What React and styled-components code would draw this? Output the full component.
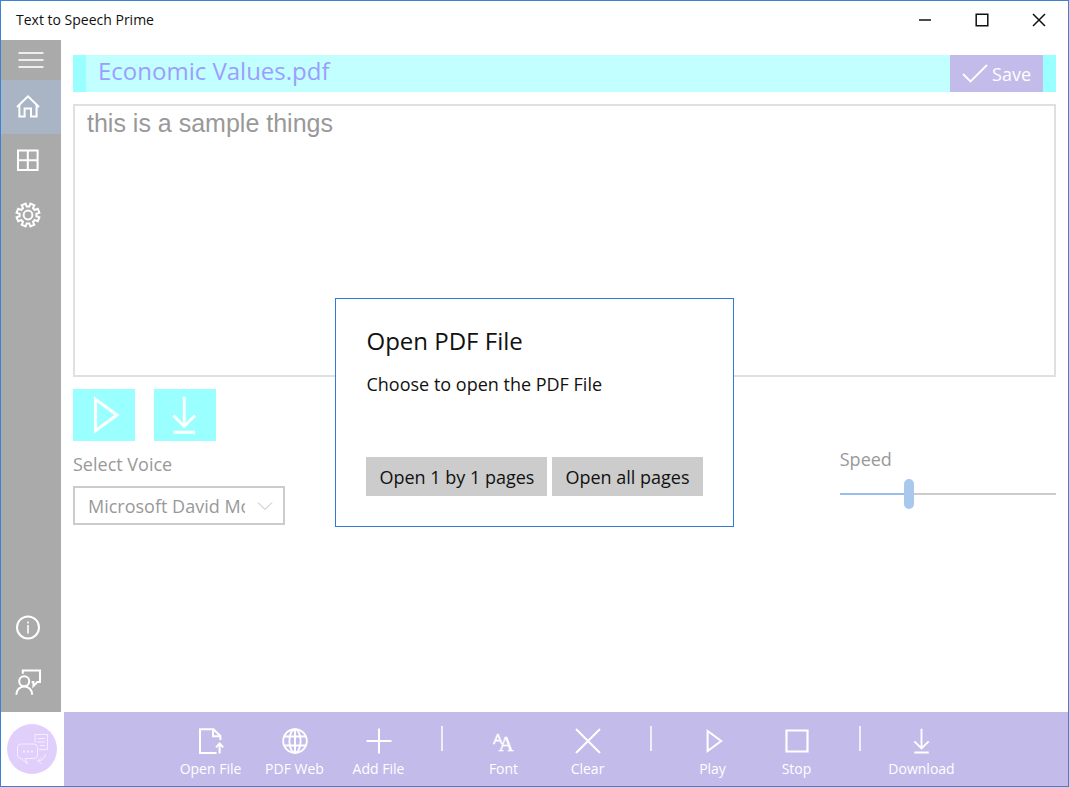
import React, { useState } from "react";
import styled, { createGlobalStyle } from "styled-components";

const MenuIcon = () => (
  <Icon size={26} viewBox="0 0 26 26" strokeWidth="2">
    <path d="M0.5 6H25.5M0.5 13H25.5M0.5 20H25.5" />
  </Icon>
);

const HomeIcon = () => (
  <Icon size={26} viewBox="0 0 26 26" strokeWidth="2">
    <path d="M2 13L13 2.4L24 13M4.4 11V22.6H9.6V14.4H16V22.6H21.6V11" />
  </Icon>
);

const GridIcon = () => (
  <Icon size={26} viewBox="0 0 26 26" strokeWidth="2">
    <path d="M3 2.5H22.6V22.1H3ZM12.8 2.5V22.1M3 12.3H22.6" />
  </Icon>
);

const GearIcon = () => (
  <Icon size={28} viewBox="0 0 28 28" strokeWidth="2">
    <path d="M11.6 2.6L12.7 5.6H15.3L16.4 2.6L20.3 4.2L19 7.2L20.8 9L23.8 7.7L25.4 11.6L22.4 12.7V15.3L25.4 16.4L23.8 20.3L20.8 19L19 20.8L20.3 23.8L16.4 25.4L15.3 22.4H12.7L11.6 25.4L7.7 23.8L9 20.8L7.2 19L4.2 20.3L2.6 16.4L5.6 15.3V12.7L2.6 11.6L4.2 7.7L7.2 9L9 7.2L7.7 4.2Z" />
    <circle cx="14" cy="14" r="4.4" />
  </Icon>
);

const InfoIcon = () => (
  <Icon size={26} viewBox="0 0 26 26" strokeWidth="2">
    <circle cx="13" cy="12.4" r="11" />
    <path d="M13 10V18.4M13 6.4V8.4" strokeWidth="1.6" />
  </Icon>
);

const FeedbackIcon = () => (
  <Icon size={28} viewBox="0 0 28 28" strokeWidth="2">
    <circle cx="10.2" cy="13.2" r="5" />
    <path d="M2.4 26.8C2.4 21.8 5.8 18.6 10.2 18.6S18.2 21.8 18.2 26.8" />
    <path d="M8.8 5.8V2.6H26V14H23.4L19.4 18V14H17.6" />
  </Icon>
);

const LogoIcon = () => (
  <svg width="50" height="50" viewBox="0 0 50 50" fill="none" stroke="#f5edff" aria-hidden="true">
    <circle cx="25" cy="25" r="25" fill="#e1cffb" stroke="none" />
    <path d="M28 19V10.5H40.5V25.5H32M30.5 14.5H38M30.5 18H38M33 21.5H38" />
    <path d="M14 20H27Q30.5 20 30.5 23.5V31Q30.5 34.5 27 34.5H18L20.5 40L14.5 34.5Q10.5 34.5 10.5 31V23.5Q10.5 20 14 20Z" />
    <path d="M38.5 30Q37.5 36 31 37M34 33.5L30.5 37L34.5 39.5" />
    <path d="M16 27.5H18M20 27.5H22M24 27.5H26" strokeWidth="2" />
  </svg>
);

const CheckIcon = () => (
  <Icon size={26} viewBox="0 0 26 26" strokeWidth="1.8">
    <path d="M1 13L8.5 20.5L25 4" />
  </Icon>
);

const OpenFileIcon = () => (
  <Icon size={28} viewBox="0 0 28 28" strokeWidth="2">
    <path d="M19.5 26H3V2.2H16.4L23.4 9V13M16 2.2V9.2H23.4" />
    <path d="M22.6 26.4V17M19 20.4L22.6 16.4L26.2 20.4" />
  </Icon>
);

const GlobeIcon = () => (
  <Icon size={28} viewBox="0 0 28 28" strokeWidth="1.9">
    <circle cx="14" cy="14" r="11.8" />
    <ellipse cx="14" cy="14" rx="5.6" ry="11.8" />
    <path d="M14 2V26M3.2 9.5H24.8M3.2 18.5H24.8" />
  </Icon>
);

const PlusIcon = () => (
  <Icon size={28} viewBox="0 0 28 28" strokeWidth="2">
    <path d="M14 1.5V26.5M1.5 14H26.5" />
  </Icon>
);

const FontIcon = () => (
  <FontGlyphs viewBox="0 0 28 28" aria-hidden="true">
    <text x="3" y="17" fontFamily="Open Sans" fontSize="15">
      A
      <tspan dx="-4" dy="7" fontFamily="Liberation Serif" fontSize="21">
        A
      </tspan>
    </text>
  </FontGlyphs>
);

const ClearIcon = () => (
  <Icon size={28} viewBox="0 0 28 28" strokeWidth="2">
    <path d="M2 2L26 26M26 2L2 26" />
  </Icon>
);

const PlayIcon = ({ size = 28 }) => (
  <Icon size={size} viewBox="0 0 28 28" strokeWidth="2">
    <path d="M8.6 4V24L22.2 14Z" />
  </Icon>
);

const StopIcon = () => (
  <Icon size={28} viewBox="0 0 28 28" strokeWidth="2.2">
    <path d="M3.5 3.5H24.5V24.5H3.5Z" />
  </Icon>
);

const DownloadIcon = ({ size = 28 }) => (
  <Icon size={size} viewBox="0 0 28 28" strokeWidth="1.9">
    <path d="M13.5 1.8V21.5M6.3 14.3L13.5 21.5L20.7 14.3M6.3 25.5H20.7" />
  </Icon>
);

const commandGroups = [
  [
    { label: "Open File", icon: <OpenFileIcon /> },
    { label: "PDF Web", icon: <GlobeIcon /> },
    { label: "Add File", icon: <PlusIcon /> },
  ],
  [
    { label: "Font", icon: <FontIcon /> },
    { label: "Clear", icon: <ClearIcon /> },
  ],
  [
    { label: "Play", icon: <PlayIcon /> },
    { label: "Stop", icon: <StopIcon /> },
  ],
  [{ label: "Download", icon: <DownloadIcon /> }],
];

const App = () => {
  const [fileName, setFileName] = useState("Economic Values.pdf");
  const [text, setText] = useState("this is a sample things");
  const [speed, setSpeed] = useState(31);
  const [modalOpen, setModalOpen] = useState(true);

  const hideModal = () => {
    setModalOpen(false);
  };

  return (
    <>
      <GlobalStyle />
      <Window>
        <TitleBar>
          <AppName>Text to Speech Prime</AppName>
          <CaptionButton aria-label="Minimize">
            <Icon size={14} viewBox="0 0 14 14" strokeWidth="1.5">
              <path d="M1 7H13" />
            </Icon>
          </CaptionButton>
          <CaptionButton aria-label="Maximize">
            <Icon size={14} viewBox="0 0 14 14" strokeWidth="1.5">
              <path d="M1.2 1.2H12.8V12.8H1.2Z" />
            </Icon>
          </CaptionButton>
          <CaptionButton aria-label="Close">
            <Icon size={14} viewBox="0 0 14 14" strokeWidth="1.5">
              <path d="M1 1L13 13M13 1L1 13" />
            </Icon>
          </CaptionButton>
        </TitleBar>

        <Body>
          <Sidebar>
            <MenuButton aria-label="Menu">
              <MenuIcon />
            </MenuButton>
            <NavButton aria-label="Home" $active>
              <HomeIcon />
            </NavButton>
            <NavButton aria-label="Apps">
              <GridIcon />
            </NavButton>
            <NavButton aria-label="Settings">
              <GearIcon />
            </NavButton>
            <Spacer />
            <NavButton aria-label="About">
              <InfoIcon />
            </NavButton>
            <NavButton aria-label="Feedback">
              <FeedbackIcon />
            </NavButton>
          </Sidebar>

          <Content>
            <FileBar>
              <FileName
                aria-label="File name"
                value={fileName}
                onChange={(e) => setFileName(e.target.value)}
              />
              <SaveButton>
                <CheckIcon />
                Save
              </SaveButton>
            </FileBar>
            <Editor
              aria-label="Text"
              spellCheck={false}
              value={text}
              onChange={(e) => setText(e.target.value)}
            />
            <Controls>
              <div>
                <Actions>
                  <ActionButton aria-label="Play">
                    <PlayIcon size={44} />
                  </ActionButton>
                  <ActionButton aria-label="Download">
                    <DownloadIcon size={42} />
                  </ActionButton>
                </Actions>
                <Label htmlFor="voice">Select Voice</Label>
                <SelectWrap>
                  <Select id="voice">
                    <option>Microsoft David Mobile</option>
                    <option>Microsoft Zira Mobile</option>
                  </Select>
                  <Chevron viewBox="0 0 16 10">
                    <path d="M1 1.5L8 8.5L15 1.5" />
                  </Chevron>
                </SelectWrap>
              </div>
              <SpeedBox>
                <Label htmlFor="speed">Speed</Label>
                <Slider
                  id="speed"
                  type="range"
                  value={speed}
                  onChange={(e) => setSpeed(Number(e.target.value))}
                  style={{ "--value": `${speed}%` }}
                />
              </SpeedBox>
            </Controls>
          </Content>
        </Body>

        <Footer>
          <LogoBox>
            <LogoIcon />
          </LogoBox>
          <CommandBar>
            {commandGroups.map((group, index) => (
              <React.Fragment key={index}>
                {index > 0 && <Separator />}
                {group.map((item) => (
                  <Command key={item.label}>
                    {item.icon}
                    <span>{item.label}</span>
                  </Command>
                ))}
              </React.Fragment>
            ))}
          </CommandBar>
        </Footer>

        {modalOpen && (
          <Overlay>
            <Modal role="dialog" aria-labelledby="modal-title">
              <ModalTitle id="modal-title">Open PDF File</ModalTitle>
              <ModalText>Choose to open the PDF File</ModalText>
              <ModalButtons>
                <ModalButton onClick={hideModal}>Open 1 by 1 pages</ModalButton>
                <ModalButton onClick={hideModal}>Open all pages</ModalButton>
              </ModalButtons>
            </Modal>
          </Overlay>
        )}
      </Window>
    </>
  );
};

const GlobalStyle = createGlobalStyle`
  * {
    box-sizing: border-box;
  }

  body {
    margin: 0;
    background-color: #ffffff;
    font-family: "Open Sans", "Noto Sans", sans-serif;
  }

  button, input, select, textarea {
    margin: 0;
    border: 0;
    border-radius: 0;
    outline: none;
    font-family: inherit;
  }
`;

const Icon = styled.svg.attrs({ "aria-hidden": true })`
  width: ${(props) => props.size}px;
  height: ${(props) => props.size}px;
  flex: none;
  fill: none;
  stroke: currentColor;
`;

const FontGlyphs = styled.svg`
  width: 28px;
  height: 28px;
  fill: currentColor;
  stroke: currentColor;
  stroke-width: 0.4;
`;

const Window = styled.div`
  position: relative;
  display: flex;
  flex-direction: column;
  min-height: 100vh;
  border: 1px solid #3c82d4;
`;

const TitleBar = styled.header`
  display: flex;
  height: 39px;
  padding: 0 1px 0 15px;
`;

const AppName = styled.span`
  flex: 1;
  font-size: 14px;
  line-height: 38px;
  color: #111111;
`;

const CaptionButton = styled.button`
  display: flex;
  align-items: center;
  justify-content: center;
  width: 57px;
  padding: 0 0 2px;
  background: transparent;
  color: #111111;
`;

const Body = styled.div`
  flex: 1;
  display: flex;
`;

const Sidebar = styled.nav`
  display: flex;
  flex-direction: column;
  width: 60px;
  padding-bottom: 3px;
  background-color: #aaaaaa;
`;

const MenuButton = styled.button`
  display: flex;
  align-items: center;
  justify-content: center;
  height: 40px;
  padding: 0;
  background: transparent;
  color: #eeeeee;
`;

const NavButton = styled.button`
  display: flex;
  align-items: center;
  justify-content: center;
  height: 54px;
  padding: 0 6px 0 0;
  background-color: ${(props) => (props.$active ? "#a9b5c5" : "transparent")};
  color: #ffffff;
`;

const Spacer = styled.div`
  flex: 1;
`;

const Content = styled.main`
  flex: 1;
  display: flex;
  flex-direction: column;
  gap: 12px;
  min-width: 0;
  padding: 15px 12px;
`;

const FileBar = styled.div`
  display: flex;
  height: 37px;
  border: solid #99ffff;
  border-width: 0 13px;
  background-color: #c2ffff;
`;

const FileName = styled.input`
  flex: 1;
  min-width: 0;
  padding: 0 12px 6px;
  background: transparent;
  font-size: 24px;
  color: #9d9dff;
`;

const SaveButton = styled.button`
  display: flex;
  align-items: center;
  gap: 4px;
  padding: 0 12px;
  background-color: #c3bbea;
  color: #ffffff;
  font-size: 18px;
`;

const Editor = styled.textarea`
  height: 273px;
  padding: 3px 12px;
  border: 2px solid #e0e0e0 !important;
  resize: none;
  background-color: #ffffff;
  color: #999999;
  font-family: "Liberation Sans", sans-serif !important;
  font-size: 25px;
  line-height: 28px;
`;

const Controls = styled.div`
  display: flex;
  justify-content: space-between;
`;

const Actions = styled.div`
  display: flex;
  gap: 19px;
  margin-bottom: 11px;
`;

const ActionButton = styled.button`
  display: flex;
  align-items: center;
  justify-content: center;
  width: 62px;
  height: 52px;
  padding: 0;
  background-color: #99ffff;
  color: #ffffff;
`;

const Label = styled.label`
  display: block;
  font-size: 18px;
  line-height: 24px;
  color: #999999;
`;

const SelectWrap = styled.div`
  display: grid;
  align-items: center;
  width: 212px;
  margin-top: 10px;
`;

const Select = styled.select`
  grid-area: 1 / 1;
  width: 100%;
  height: 39px;
  padding: 0 38px 0 13px;
  border: 2px solid #cccccc !important;
  appearance: none;
  background: transparent;
  color: #999999;
  font-size: 18px;
`;

const Chevron = styled.svg`
  grid-area: 1 / 1;
  justify-self: end;
  width: 16px;
  height: 10px;
  margin-right: 12px;
  fill: none;
  stroke: #bbbbbb;
  pointer-events: none;
`;

const SpeedBox = styled.div`
  width: 22%;
  padding-top: 58px;
`;

const Slider = styled.input`
  display: block;
  width: 100%;
  height: 30px;
  margin-top: 8px;
  appearance: none;
  background: transparent;

  &::-webkit-slider-runnable-track {
    height: 2px;
    background: linear-gradient(
      to right,
      #96bff0 var(--value),
      #cccccc var(--value)
    );
  }

  &::-webkit-slider-thumb {
    appearance: none;
    width: 10px;
    height: 30px;
    margin-top: -14px;
    border-radius: 5px;
    background-color: #a9c8ed;
  }
`;

const Footer = styled.footer`
  display: flex;
  gap: 1px;
  height: 74px;
`;

const LogoBox = styled.div`
  display: flex;
  align-items: center;
  justify-content: center;
  width: 62px;
`;

const CommandBar = styled.div`
  flex: 1;
  display: flex;
  justify-content: center;
  background-color: #c3bbea;
  color: #ffffff;
`;

const Command = styled.button`
  display: flex;
  flex-direction: column;
  align-items: center;
  gap: 4px;
  width: 84px;
  padding: 15px 0 0;
  background: transparent;
  color: inherit;
  font-size: 14px;
  line-height: 20px;
  white-space: nowrap;
`;

const Separator = styled.div`
  width: 2px;
  height: 25px;
  margin: 14px 19px 0 20px;
  background-color: #f0eefa;
`;

const Overlay = styled.div`
  position: absolute;
  inset: 38px 0 0;
  display: flex;
  align-items: center;
  justify-content: center;
`;

const Modal = styled.div`
  display: flex;
  flex-direction: column;
  padding: 30px;
  border: 1px solid #2f7bd6;
  background-color: #ffffff;
  color: #111111;
`;

const ModalTitle = styled.h2`
  margin: 0 0 15px;
  font-size: 24px;
  font-weight: 400;
  line-height: 24px;
`;

const ModalText = styled.p`
  margin: 0 0 57px;
  font-size: 18px;
  line-height: 32px;
`;

const ModalButtons = styled.div`
  display: flex;
  gap: 5px;
`;

const ModalButton = styled.button`
  height: 39px;
  padding: 0 13px;
  background-color: #cccccc;
  color: #111111;
  font-size: 18px;
`;

export default App;
